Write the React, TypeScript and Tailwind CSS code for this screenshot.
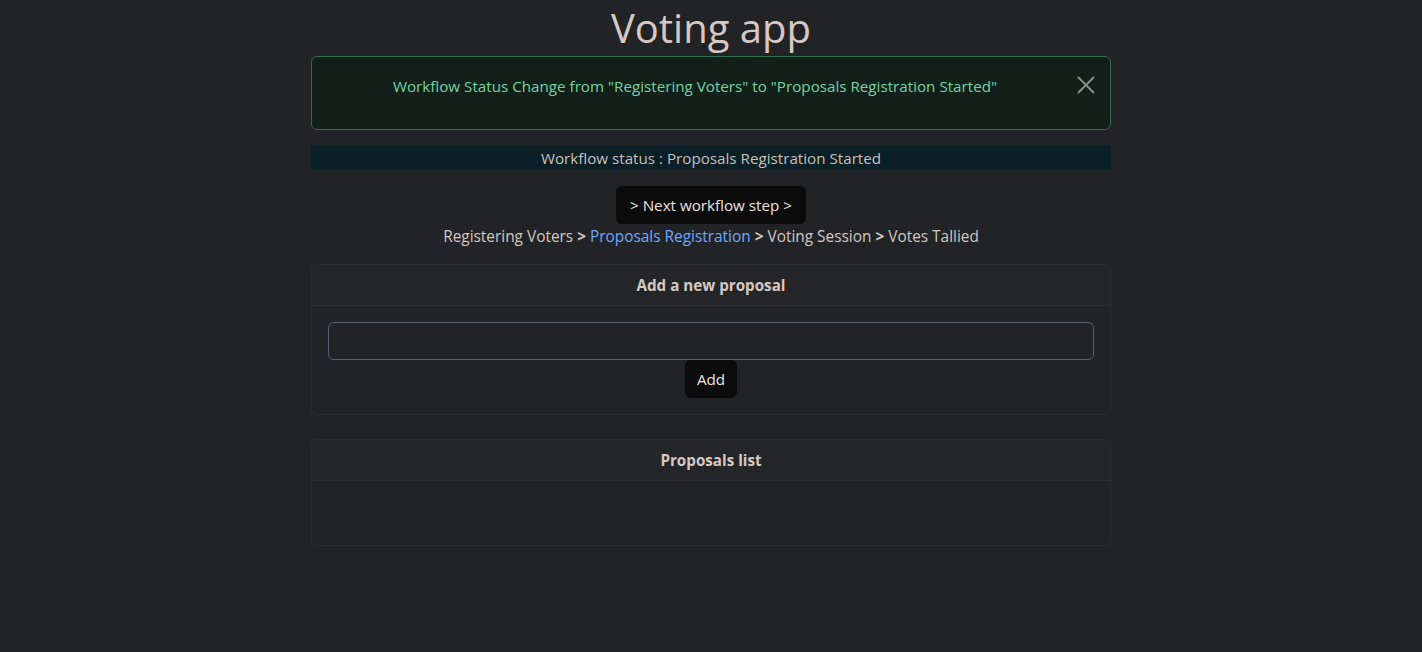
import React from "react";

export default function App() {
  return (
    <div className="min-h-[652px] w-full bg-[#222326] text-[#d3c7c1]" style={{ fontFamily: '"Open Sans", "Noto Sans", sans-serif' }}>
      <div className="mx-auto flex w-[800px] flex-col items-center">
        <h1 className="mt-[2px] text-[40px] font-medium leading-[52px] text-[#d6c8c2]">Voting app</h1>
        <div className="relative mt-[2px] flex h-[74px] w-full items-start justify-center rounded-md border border-[#2d6e4e] bg-[#13201a] pl-[16px] pr-[48px] pt-[17px] text-[15.2px] leading-[24px] text-[#75d3a1]">
          <span>Workflow Status Change from "Registering Voters" to "Proposals Registration Started"</span>
          <button className="absolute right-[14px] top-[18px] text-[#8c9190]">
            <svg width="20" height="20" viewBox="0 0 20 20" fill="none" stroke="currentColor" strokeWidth="1.8">
              <path d="M2 2 L18 18 M18 2 L2 18" />
            </svg>
          </button>
        </div>
        <div className="mt-[16px] flex h-[24px] w-full items-center justify-center bg-[#0a1f26] text-[15.2px] text-[#c9bfba]">
          Workflow status : Proposals Registration Started
        </div>
        <button className="mt-[16px] h-[38px] rounded-md bg-[#0b0b0c] px-[14px] text-[15.2px] text-[#ebe3df]">&gt; Next workflow step &gt;</button>
        <div className="mt-[1px] text-[15.4px] leading-[24px] text-[#d3c7c1]">
          Registering Voters <b className="font-bold">&gt;</b> <span className="text-[#6ea8fe]">Proposals Registration</span> <b className="font-bold">&gt;</b> Voting Session <b className="font-bold">&gt;</b> Votes Tallied
        </div>
        <div className="mt-[15px] w-full rounded-md border border-[#2c2d30]">
          <div className="flex h-[41px] items-center justify-center border-b border-[#2c2d30] bg-[#242528] text-[15.2px] font-bold text-[#d6c8c2]">Add a new proposal</div>
          <div className="flex flex-col items-center px-[16px] pb-[16px] pt-[16px]">
            <input className="h-[38px] w-full rounded-md border border-[#5a606b] bg-[#222326] px-3 text-[16px] outline-none" />
            <button className="h-[38px] rounded-md bg-[#0b0b0c] px-[12px] text-[15.2px] text-[#ebe3df]">Add</button>
          </div>
        </div>
        <div className="mt-[24px] w-full rounded-md border border-[#2c2d30]">
          <div className="flex h-[41px] items-center justify-center border-b border-[#2c2d30] bg-[#242528] text-[15.2px] font-bold text-[#d6c8c2]">Proposals list</div>
          <div className="h-[64px]" />
        </div>
      </div>
    </div>
  );
}
